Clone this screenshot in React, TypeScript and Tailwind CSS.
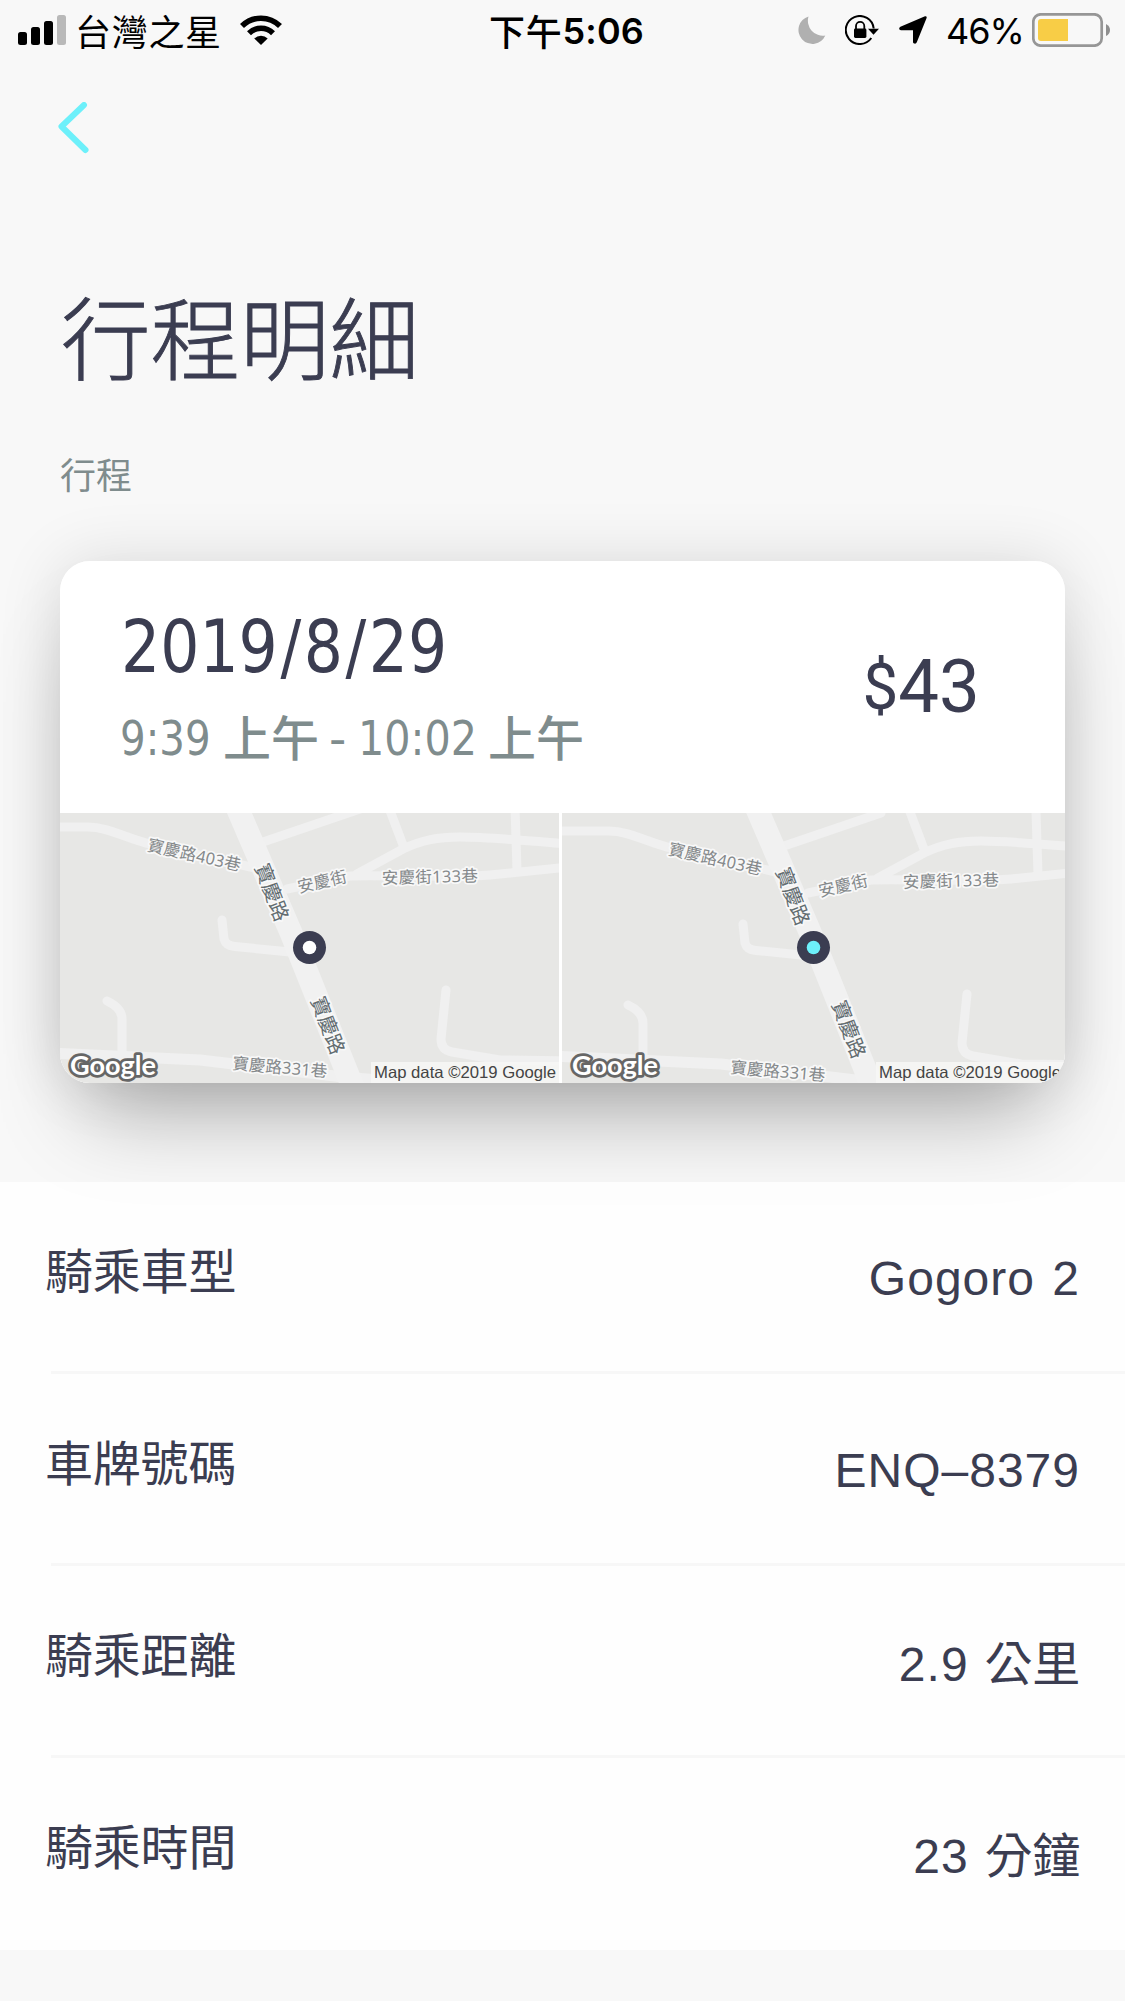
import React from "react";

const CJK = "font-['Noto_Sans_CJK_TC',sans-serif]";

function SignalIcon() {
  return (
    <svg width="48" height="30" viewBox="0 0 48 30" className="block">
      <rect x="0" y="17" width="9" height="13" rx="2.5" />
      <rect x="13" y="12" width="9" height="18" rx="2.5" />
      <rect x="26" y="6" width="9" height="24" rx="2.5" />
      <rect x="39" y="0" width="9" height="30" rx="2.5" fill="#b9b9b9" />
    </svg>
  );
}

function WifiIcon() {
  return (
    <svg width="42" height="30" viewBox="0 0 42 30" className="block">
      <g fill="none" stroke="#000" strokeWidth="5.6">
        <path d="M2 11 A27 27 0 0 1 40 11" />
        <path d="M9 18.2 A17 17 0 0 1 33 18.2" />
      </g>
      <path d="M21 30 L14.3 23.4 A9.6 9.6 0 0 1 27.7 23.4 Z" />
    </svg>
  );
}

function MoonIcon() {
  return (
    <svg width="28" height="28" viewBox="0 0 28 28" className="block">
      <path d="M10.5 0.5 A14 14 0 1 0 27.3 19.5 A15 15 0 0 1 10.5 0.5 Z" fill="#b0b0b0" />
    </svg>
  );
}

function RotationLockIcon() {
  return (
    <svg width="34" height="30" viewBox="0 0 34 30" className="block">
      <path d="M26.3 23 A14 14 0 1 1 28.7 13.5" fill="none" stroke="#000" strokeWidth="2" />
      <path d="M23 13.8 H34 L28.5 19.8 Z" />
      <rect x="9" y="13.6" width="12.4" height="9.4" rx="1.4" />
      <path d="M11 14.5 V11 A4.1 4.1 0 0 1 19.3 11 V14.5" fill="none" stroke="#000" strokeWidth="1.8" />
    </svg>
  );
}

function LocationIcon() {
  return (
    <svg width="28" height="28" viewBox="0 0 28 28" className="block">
      <path d="M26 0.3 Q28.3 0 27.5 2.2 L17.8 26.3 Q16.8 28.4 14.6 27.2 Q14 26.8 14 26 V14.2 H2 Q0 14 0.2 12.4 Q0.3 11.2 1.4 10.7 Z" />
    </svg>
  );
}

function BatteryIcon() {
  return (
    <svg width="78" height="34" viewBox="0 0 78 34" className="block">
      <rect x="1.3" y="1.3" width="68.4" height="31.4" rx="7.5" fill="none" stroke="#969696" strokeWidth="2.7" />
      <path d="M9 6 H36 V28 H9 Q6 28 6 25 V9 Q6 6 9 6 Z" fill="#f8cd46" />
      <path d="M74 11 Q78 13 78 17 Q78 21 74 23 Z" fill="#8f8f8f" />
    </svg>
  );
}

function StatusBar() {
  return (
    <div className="grid h-[60px] grid-cols-[490px_1fr_auto] items-center pr-[15px] pl-[18px] text-black">
      <div className="flex items-center">
        <SignalIcon />
        <span className={`ml-[9px] w-[150px] pb-px text-[36px] leading-[36px] tracking-[0.7px] whitespace-nowrap ${CJK}`}>
          台灣之星
        </span>
        <span className="ml-[15px]">
          <WifiIcon />
        </span>
      </div>
      <div className="flex items-center text-[36px] leading-[36px] font-medium whitespace-nowrap">
        <span className={`-ml-[19px] pb-px tracking-[0.7px] ${CJK}`}>下午</span>
        <span className="pt-px font-[Inter,sans-serif] font-semibold tracking-[0.2px]">5:06</span>
      </div>
      <div className="flex items-center">
        <MoonIcon />
        <span className="ml-[19px]">
          <RotationLockIcon />
        </span>
        <span className="ml-[20px]">
          <LocationIcon />
        </span>
        <span className="ml-[19px] w-[86px] pt-px font-[Inter,sans-serif] text-[36px] leading-[36px] tracking-[-1px]">46%</span>
        <BatteryIcon />
      </div>
    </div>
  );
}

function MapRoads() {
  return (
    <g fill="none" stroke="#f0f0f0" strokeWidth="9" strokeLinejoin="round" strokeLinecap="round">
      <path d="M-30 14 H28 C48 14 65 25 90 31 L195 55" />
      <path d="M203 29 L300 -4" />
      <path d="M329 -5 L343 32" />
      <path d="M297 61 L343 36 C362 27 378 24 400 24 C430 24 470 28 520 32" />
      <path d="M227 76 L290 63 C330 62 400 65 430 62 L520 53" />
      <path d="M455 -5 L457 57" />
      <path d="M162 107 L164 126 Q166 133 175 133.500 L230 139" />
      <path d="M47 188 Q62 195 62 206 V238" />
      <path d="M386 177 L381 226 Q381 237 392 239 L440 247 L520 248" />
      <path d="M-30 239 L140 247 L283 264 L330 268" strokeWidth="11" />
      <path d="M176 -8 L232 122 L296 282" strokeWidth="23" stroke="#f1f1f1" />
    </g>
  );
}

function MapLabel({ x, y, angle, length, size = 16, color = "#85898b", children }: {
  x: number; y: number; angle: number; length: number; size?: number; color?: string; children: string;
}) {
  return (
    <text
      transform={`translate(${x} ${y}) rotate(${angle})`}
      fontSize={size}
      textLength={length}
      fill={color}
      stroke="#f8f8f8"
      strokeWidth="3.500"
      strokeLinejoin="round"
      paintOrder="stroke"
      className="font-['Noto_Sans','Noto_Sans_CJK_TC',sans-serif]"
    >
      {children}
    </text>
  );
}

function MapTile({ width, dx, dy, lane, pin, credit, dot }: {
  width: number; dx: number; dy: number; lane: number; pin: number; credit: number; dot: string;
}) {
  return (
    <svg width={width} height="270" viewBox={`0 0 ${width} 270`} className="block shrink-0 bg-[#e7e7e5]">
      <g transform={`translate(${dx} ${dy})`}>
        <MapRoads />
        <MapLabel x={86.5} y={37.5} angle={12.5} size={16.500} length={95}>寶慶路403巷</MapLabel>
        <MapLabel x={239} y={80} angle={-13} size={16.500} length={50}>安慶街</MapLabel>
        <MapLabel x={322} y={71} angle={-1.5} size={16.500} length={96}>安慶街133巷</MapLabel>
        <MapLabel x={194.5} y={54} angle={69} size={20} length={60} color="#626c70">寶慶路</MapLabel>
        <MapLabel x={250.5} y={187} angle={69} size={20} length={60} color="#626c70">寶慶路</MapLabel>
        <MapLabel x={172 + lane} y={256} angle={5} size={16.500} length={95}>寶慶路331巷</MapLabel>
      </g>
      <text
        x="10"
        y="262"
        fontSize="27"
        fontWeight="700"
        textLength="86"
        lengthAdjust="spacingAndGlyphs"
        fill="#fff"
        stroke="#666"
        strokeWidth="5.500"
        strokeLinejoin="round"
        paintOrder="stroke"
        className="font-[Lato,sans-serif]"
      >
        Google
      </text>
      <rect x={credit} y="249" width="200" height="21" fill="#f7f7f6" fillOpacity="0.85" />
      <text
        x={credit + 3}
        y="265"
        fontSize="16.500"
        textLength="182"
        lengthAdjust="spacingAndGlyphs"
        fill="#444"
        className="font-['Liberation_Sans',sans-serif]"
      >
        Map data ©2019 Google
      </text>
      <circle cx={pin} cy="134.500" r="16.500" fill="#3b3d51" />
      <circle cx={pin} cy="134.500" r="6.800" fill={dot} />
    </svg>
  );
}

function TripCard() {
  return (
    <section className="mx-[60px] mt-[55px] h-[522px] rounded-[30px] shadow-[0_56px_88px_-26px_rgba(0,0,0,0.29),0_0_64px_rgba(0,0,0,0.12)]">
      <div className="h-full overflow-hidden rounded-[30px] bg-white">
        <div className="flex h-[252px] items-center justify-between pr-[85px] pl-[60px]">
          <div className="flex flex-col">
            <div className="-mt-[4px] ml-px h-[84px] w-[330px] origin-left scale-x-[0.85] font-['DejaVu_Sans',sans-serif] text-[72.500px] leading-[84px] whitespace-nowrap text-[#3b3d51]">
              2019<span className="mx-[3px]">/</span>8<span className="mx-[3px]">/</span>29
            </div>
            <div className={`mt-[16px] flex h-[60px] items-center text-[48px] leading-[60px] whitespace-nowrap text-[#7f8c8d] ${CJK}`}>
              <span className="w-[103px] origin-left translate-y-[3px] scale-x-[0.84] font-['DejaVu_Sans',sans-serif]">9:39</span>
              <span className="w-[106px] font-medium">上午</span>
              <span className="w-[29px] origin-left translate-y-[3px] font-['DejaVu_Sans',sans-serif]">-</span>
              <span className="w-[130px] origin-left translate-y-[3px] scale-x-[0.86] font-['DejaVu_Sans',sans-serif]">10:02</span>
              <span className="font-medium">上午</span>
            </div>
          </div>
          <div className="flex origin-right scale-x-[0.98] items-center font-[Roboto,sans-serif] text-[74px] leading-[84px] text-[#3b3d51]">
            <span className="text-[65px]">$</span>
            <span>43</span>
          </div>
        </div>
        <div className="flex gap-[3px]">
          <MapTile width={499} dx={0} dy={0} lane={0} pin={249.5} credit={311} dot="#ffffff" />
          <MapTile width={503} dx={19} dy={4} lane={-23} pin={251.500} credit={314} dot="#6df0fa" />
        </div>
      </div>
    </section>
  );
}

const rows = [
  { label: "騎乘車型", value: "Gogoro 2", unit: "" },
  { label: "車牌號碼", value: "ENQ–8379", unit: "" },
  { label: "騎乘距離", value: "2.9", unit: "公里" },
  { label: "騎乘時間", value: "23", unit: "分鐘" },
];

function DetailRow({ label, value, unit, last }: { label: string; value: string; unit: string; last: boolean }) {
  return (
    <div className="flex h-[192px] flex-col">
      <div className="flex flex-1 items-center justify-between pr-[45px] pl-[45px] text-[48px] leading-[60px] text-[#3b3d51]">
        <span className={`mb-[18px] tracking-[-0.2px] ${CJK}`}>{label}</span>
        <span className="mt-[4px] flex h-[60px] items-baseline font-['Liberation_Sans',sans-serif] tracking-[1px] [word-spacing:3px]">
          <span className={unit ? "relative -top-[3px]" : ""}>{value}</span>
          {unit && <span className={`relative -top-[3px] ml-[16px] leading-[60px] tracking-[-0.3px] ${CJK}`}>{unit}</span>}
        </span>
      </div>
      <div className={last ? "h-[3px]" : "ml-[51px] h-[3px] bg-[#f7f7f7]"} />
    </div>
  );
}

export default function App() {
  return (
    <main className="h-[2001px] w-[1125px] overflow-hidden bg-[#f8f8f8]">
      <StatusBar />
      <div className="h-[224px] pt-[42px] pl-[58px]">
        <svg width="31" height="52" viewBox="0 0 31 52" className="block" fill="none" stroke="#6df0fa" strokeWidth="6" strokeLinecap="round" strokeLinejoin="round">
          <path d="M26 3 L3.500 24.500 L27.500 48" />
        </svg>
      </div>
      <h1 className={`ml-[61px] h-[100px] text-[89.500px] leading-[100px] font-light text-[#3b3d51] [-webkit-text-stroke:0.9px_#3b3d51] ${CJK}`}>行程明細</h1>
      <h2 className={`mt-[69px] ml-[60px] h-[53px] text-[36px] leading-[40px] text-[#7f8c8d] ${CJK}`}>行程</h2>
      <TripCard />
      <section className="relative mt-[99px] bg-white/80">
        {rows.map((row, i) => (
          <DetailRow key={row.label} {...row} last={i === rows.length - 1} />
        ))}
      </section>
    </main>
  );
}
